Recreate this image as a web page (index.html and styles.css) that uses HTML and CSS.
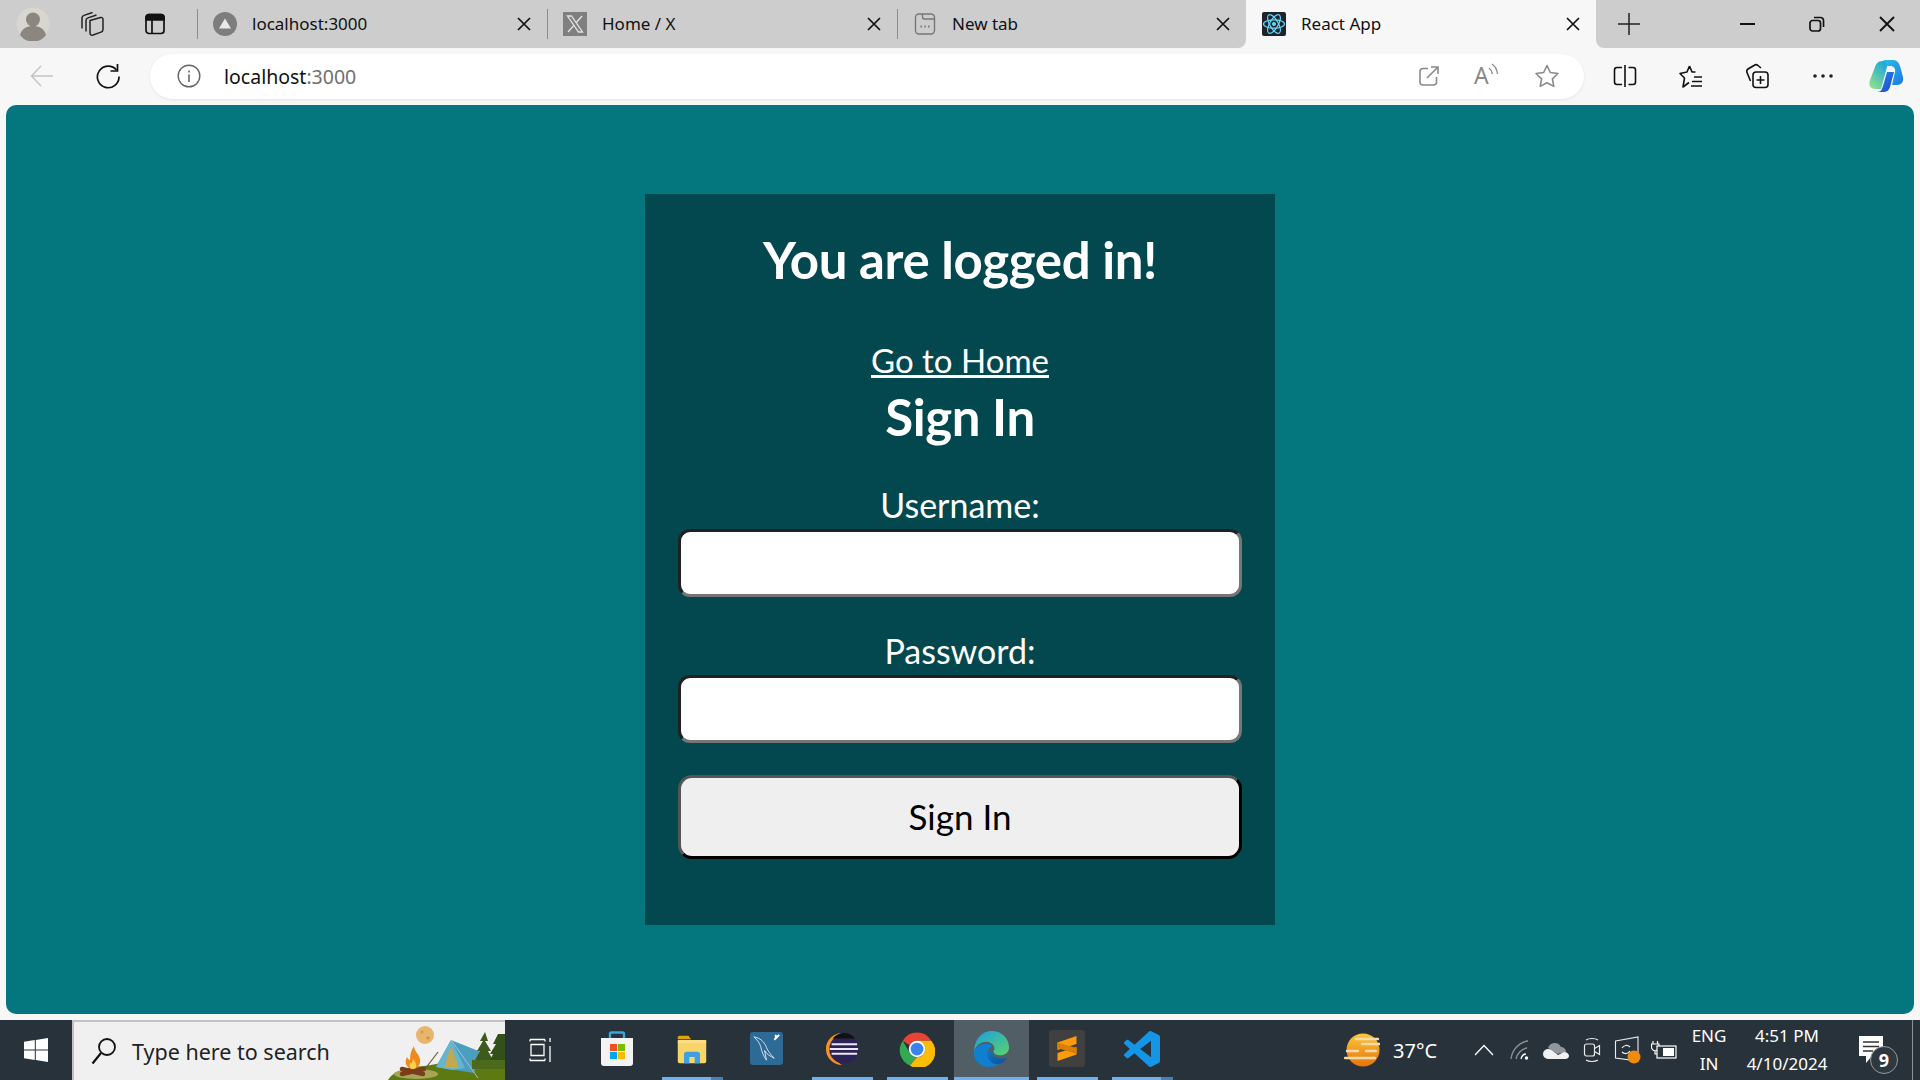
FILE: index.html
```html
<!DOCTYPE html>
<html lang="en">
<head>
  <meta charset="UTF-8" />
  <title>React App</title>
  <link rel="stylesheet" href="styles.css">
</head>
<body>

  <!-- browser tabs -->
  <div class="tabstrip">
    <div class="strip-grey strip-left">
      <div class="strip-tool strip-avatar">
        <svg width="34" height="34" viewBox="0 0 34 34"><circle cx="17" cy="17" r="16.500" fill="#d8d7cf"/><circle cx="17" cy="12.500" r="7" fill="#8b8780"/><path d="M4 28c2-7 7-9 13-9s11 2 13 9a16 16 0 0 1-26 0z" fill="#8b8780"/></svg>
      </div>
      <div class="strip-tool strip-workspaces">
        <svg width="26" height="26" viewBox="0 0 26 26" fill="none" stroke="#222" stroke-width="1.500"><path d="M11 9.500 21.500 6.500c1.500-.4 2.500.5 2.500 2v10c0 1.300-.7 2.200-2 2.600L14 24c-1.700.5-3-.4-3-2z"/><path d="M7 20.500V9.500c0-1.300.7-2.200 2-2.600L17.500 4"/><path d="M3 17.500V7c0-1.300.7-2.200 2-2.600L13.500 1.500"/></svg>
      </div>
      <div class="strip-tool strip-vertical">
        <svg width="24" height="24" viewBox="0 0 24 24" fill="none" stroke="#111" stroke-width="1.700"><rect x="3" y="2.500" width="18" height="19" rx="3"/><path d="M3 5.500a3 3 0 0 1 3-3h12a3 3 0 0 1 3 3V8H3z" fill="#111"/><path d="M9 8v13"/></svg>
      </div>

      <span class="tab-sep"></span>
      <div class="tab">
        <svg class="tab-icon" width="24" height="24" viewBox="0 0 24 24"><circle cx="12" cy="12" r="12" fill="#7d7d7d"/><path d="M12 6.500 18 16.500H6z" fill="#e9e9e9"/></svg>
        <span class="tab-title">localhost:3000</span>
        <svg class="tab-close" width="16" height="16" viewBox="0 0 16 16" stroke="#111" stroke-width="1.700"><path d="M2 2l12 12M14 2 2 14"/></svg>
      </div>

      <span class="tab-sep"></span>
      <div class="tab">
        <svg class="tab-icon" width="24" height="24" viewBox="0 0 24 24"><rect width="24" height="24" fill="#7f7f7f"/><path d="M4.500 4h4l11 16h-4z" fill="none" stroke="#e4e4e4" stroke-width="1.300"/><path d="M19 4 13.200 10.800M10.600 13.600 5 20" stroke="#e4e4e4" stroke-width="1.400"/></svg>
        <span class="tab-title">Home / X</span>
        <svg class="tab-close" width="16" height="16" viewBox="0 0 16 16" stroke="#111" stroke-width="1.700"><path d="M2 2l12 12M14 2 2 14"/></svg>
      </div>

      <span class="tab-sep"></span>
      <div class="tab tab-last">
        <svg class="tab-icon" width="24" height="24" viewBox="0 0 24 24" fill="none" stroke="#777" stroke-width="1.400"><rect x="2.500" y="2" width="19" height="20" rx="3.500"/><path d="M9.500 2v3a2 2 0 0 0 2 2h10"/><path d="M7.500 14.500h1.500M11.300 14.500h1.500M15 14.500h1.500" stroke-width="1.800"/></svg>
        <span class="tab-title">New tab</span>
        <svg class="tab-close" width="16" height="16" viewBox="0 0 16 16" stroke="#111" stroke-width="1.700"><path d="M2 2l12 12M14 2 2 14"/></svg>
      </div>
    </div>

    <div class="tab tab-active">
      <svg class="tab-icon" width="24" height="24" viewBox="0 0 24 24"><rect width="24" height="24" rx="2" fill="#20232a"/><g fill="none" stroke="#61dafb" stroke-width="1.200"><ellipse cx="12" cy="12" rx="10.500" ry="4.200"/><ellipse cx="12" cy="12" rx="10.500" ry="4.200" transform="rotate(60 12 12)"/><ellipse cx="12" cy="12" rx="10.500" ry="4.200" transform="rotate(120 12 12)"/></g><circle cx="12" cy="12" r="2" fill="#61dafb"/></svg>
      <span class="tab-title">React App</span>
      <svg class="tab-close" width="16" height="16" viewBox="0 0 16 16" stroke="#111" stroke-width="1.700"><path d="M2 2l12 12M14 2 2 14"/></svg>
    </div>

    <div class="strip-grey strip-right">
      <svg class="new-tab" width="24" height="24" viewBox="0 0 24 24" stroke="#222" stroke-width="1.500"><path d="M12 1v22M1 12h22"/></svg>
      <div class="win-controls">
        <svg width="18" height="18" viewBox="0 0 18 18" stroke="#111" stroke-width="2"><path d="M2 9h15"/></svg>
        <svg width="18" height="18" viewBox="0 0 18 18" fill="none" stroke="#111" stroke-width="1.700"><rect x="2" y="5.500" width="10.500" height="10.500" rx="2.500"/><path d="M6 2.500h6.500a3 3 0 0 1 3 3V12"/></svg>
        <svg width="18" height="18" viewBox="0 0 18 18" stroke="#111" stroke-width="1.900"><path d="M2 2l14 14M16 2 2 16"/></svg>
      </div>
    </div>
  </div>

  <!-- address bar -->
  <div class="toolbar">
    <div class="nav-btns">
      <svg width="24" height="24" viewBox="0 0 24 24" fill="none" stroke="#c4c4c4" stroke-width="1.500"><path d="M23 12H1.500M11 2 1.500 12 11 22"/></svg>
      <svg width="26" height="26" viewBox="0 0 26 26" fill="none" stroke="#111" stroke-width="1.700"><path d="M21.500 7A10.800 10.800 0 1 0 24 13.500"/><path d="M22.500 1v7h-7"/></svg>
    </div>
    <div class="address">
      <svg width="24" height="24" viewBox="0 0 24 24" fill="none" stroke="#666" stroke-width="1.400"><circle cx="12" cy="12" r="10.800"/><path d="M12 10.500V18M12 6.500v2" stroke-width="1.600"/></svg>
      <span class="url">localhost<span class="url-port">:3000</span></span>
      <div class="address-tools">
        <svg width="22" height="22" viewBox="0 0 22 22" fill="none" stroke="#8a8a8a" stroke-width="1.600"><path d="M10 3.500H5a3 3 0 0 0-3 3v10.500a3 3 0 0 0 3 3h10.500a3 3 0 0 0 3-3V12"/><path d="M9 13 20 2M13 2h7v7"/></svg>
        <svg class="read-icon" width="28" height="34" viewBox="0 0 28 34" fill="none" stroke="#8a8a8a" stroke-width="1.300"><text class="read-a" x="1" y="25">A</text><path d="M16 9c2 1.500 3 3.500 3.500 6M19 5c3 2 5 5 5.500 10"/></svg>
        <svg width="26" height="26" viewBox="0 0 26 26" fill="none" stroke="#8a8a8a" stroke-width="1.600"><path d="M13 2.500l3.300 7 7.700 1-5.600 5.300 1.400 7.600-6.800-3.700-6.800 3.700 1.400-7.600L2 10.500l7.700-1z" stroke-linejoin="round"/></svg>
      </div>
    </div>
    <div class="toolbar-actions">
      <svg class="tool-btn" width="24" height="24" viewBox="0 0 24 24" fill="none" stroke="#111" stroke-width="1.600"><path d="M9 3.500H4a2.500 2.500 0 0 0-2.500 2.500v12A2.500 2.500 0 0 0 4 20.500h5M15.500 3.500H20A2.500 2.500 0 0 1 22.500 6v12a2.500 2.500 0 0 1-2.500 2.500h-4.500M12 1v22"/></svg>
      <svg class="tool-btn" width="24" height="24" viewBox="0 0 24 24" fill="none" stroke="#111" stroke-width="1.600"><path d="M10.500 2 13 8h3.500M10.500 2 8 8 1 9.500l4.500 4.500L4 23l6-4.500M15 13h8M13 17.500h10M12 22h11" stroke-linejoin="round"/></svg>
      <svg class="tool-btn" width="24" height="26" viewBox="0 0 24 26" fill="none" stroke="#111" stroke-width="1.600"><rect x="8" y="9" width="15" height="15.500" rx="3"/><path d="M15.500 13v8M11.500 17h8"/><path d="M16 5 13 2.500a3 3 0 0 0-4 0L3 6a3 3 0 0 0-1 3.500L5.500 18"/></svg>
      <svg class="tool-btn" width="24" height="24" viewBox="0 0 24 24" fill="#222"><circle cx="4" cy="12" r="1.800"/><circle cx="12" cy="12" r="1.800"/><circle cx="20" cy="12" r="1.800"/></svg>
      <svg class="copilot" width="36" height="32" viewBox="0 0 36 32">
        <defs>
          <linearGradient id="copA" x1="0" y1="0" x2="1" y2="1"><stop offset="0" stop-color="#2cc0ea"/><stop offset="1" stop-color="#1c78e4"/></linearGradient>
          <linearGradient id="copB" x1="0.200" y1="1" x2="0.800" y2="0"><stop offset="0" stop-color="#8fe08a"/><stop offset="1" stop-color="#17a6dc"/></linearGradient>
          <linearGradient id="copC" x1="0" y1="0" x2="1" y2="1"><stop offset="0" stop-color="#2a8cee"/><stop offset="1" stop-color="#1a48c8"/></linearGradient>
        </defs>
        <path d="M15 1C10 1 8 4 7 7L2 20c-2 6 1 9 6 9h5l6-22c1-4-1-6-4-6z" fill="url(#copB)"/>
        <path d="M15 0h10c4 0 6 3 7 6l3 11c1 5-2 8-6 8h-5l3-13c1-4-2-6-5-6h-4c0-3-1-5-3-6z" fill="url(#copA)"/>
        <path d="M19 12h7l-4 15c-1 3-3 5-7 5H9c4 0 5-3 6-6z" fill="url(#copC)"/>
      </svg>
    </div>
  </div>

  <!-- the actual page -->
  <main class="page">
    <section class="auth-card">
      <h1 class="auth-title">You are logged in!</h1>
      <a class="home-link" href="#">Go to Home</a>
      <h2 class="auth-title form-title">Sign In</h2>
      <form class="auth-form">
        <label class="field-label" for="username">Username:</label>
        <input class="field-input" id="username" type="text">
        <label class="field-label field-label-next" for="password">Password:</label>
        <input class="field-input" id="password" type="password">
        <button class="submit-btn" type="button">Sign In</button>
      </form>
    </section>
  </main>

  <!-- windows taskbar -->
  <footer class="taskbar">
    <div class="start-btn">
      <svg width="24" height="24" viewBox="0 0 24 24" fill="#fff"><path d="M0 3.700 10.800 2.100V11.400H0zM11.800 2 24 0V11.400H11.800zM0 12.500H10.800V21.900L0 20.300zM11.800 12.500H24V24L11.800 22z"/></svg>
    </div>
    <div class="searchbox">
      <svg class="search-icon" width="26" height="28" viewBox="0 0 26 28" fill="none" stroke="#111" stroke-width="1.800"><circle cx="16" cy="10" r="8"/><path d="M10 16 1.500 26.500" stroke-width="2.200"/></svg>
      <span class="search-text">Type here to search</span>
      <svg class="search-art" width="117" height="58" viewBox="0 0 117 58">
        <path d="M0 58c6-10 20-13 36-14 14-1 30-8 48-8 14 0 26 4 33 6v16z" fill="#5d7a12"/>
        <ellipse cx="28" cy="52" rx="22" ry="5" fill="#a5a655"/>
        <circle cx="37" cy="13" r="9" fill="#e8b56c"/>
        <circle cx="34" cy="10" r="1.500" fill="#cf9650"/><circle cx="40" cy="16" r="1.800" fill="#cf9650"/>
        <path d="M25 48c-7-2-9-8-6-13 1 2 2 3 3 3 0-5 1-10 4-14 0 5 5 8 6 13 1 5-2 9-7 11z" fill="#f08a1d"/>
        <path d="M25 48c-3-1-4-4-3-7 2 1 2 0 3-4 2 3 4 5 3 8 0 1-1 2-3 3z" fill="#f9d24a"/>
        <path d="M14 47l21 5M14 52l22-5" stroke="#7a3d1c" stroke-width="4.500" stroke-linecap="round"/>
        <path d="M37 47 50 30" stroke="#6b5a3a" stroke-width="1.200"/>
        <path d="M48 45 63 18l30 12-7 21z" fill="#4a9fc0"/>
        <path d="M63 18 48 45l16 3 13-2z" fill="#64b4d2"/>
        <path d="M63 24 56 46h15z" fill="#c2a94a"/>
        <path d="M63 18 90 56" stroke="#a9c0c8" stroke-width="1"/>
        <path d="M97 10l-5 9h3l-6 10h3l-6 11h20l-6-11h3l-6-10h3z" fill="#3e5a1c"/>
        <path d="M110 12l-5 10h3l-6 10h3l-5 10h20V12z" fill="#33501a"/>
        <path d="M84 38h33v9H84z" fill="#4c6a1c"/>
      </svg>
    </div>

    <div class="task-view">
      <svg width="24" height="26" viewBox="0 0 24 26" fill="none" stroke="#fff" stroke-width="1.300"><path d="M1 2.500h15M1 23.500h15M2 7.500h13v11H2zM1 23.500v-2M16 23.500v-2M1 2.500v2M16 2.500v2M21 1v4M21 9v16"/></svg>
    </div>

    <div class="task-apps">
      <div class="task-app">
        <svg width="34" height="36" viewBox="0 0 34 36"><path d="M10 7V3a1.500 1.500 0 0 1 1.500-1.500h11A1.500 1.500 0 0 1 24 3v4" fill="none" stroke="#35a8e0" stroke-width="2.400"/><path d="M1 7h32v25a3 3 0 0 1-3 3H4a3 3 0 0 1-3-3z" fill="#f3f3f3"/><rect x="10" y="13" width="7" height="7" fill="#f25022"/><rect x="18" y="13" width="7" height="7" fill="#7fba00"/><rect x="10" y="21" width="7" height="7" fill="#00a4ef"/><rect x="18" y="21" width="7" height="7" fill="#ffb900"/></svg>
      </div>
      <div class="task-app task-running task-stacked">
        <svg width="32" height="32" viewBox="0 0 36 36"><rect x="2" y="8" width="32" height="26" rx="2" fill="#f8d568"/><path d="M2 5a2 2 0 0 1 2-2h10l3 4H2z" fill="#dfa510"/><path d="M2 8h32v3H2z" fill="#fbe08a"/><path d="M9 34V24a3 3 0 0 1 3-3h12a3 3 0 0 1 3 3v10h-6v-7h-6v7z" fill="#3f9fe0"/></svg>
      </div>
      <div class="task-app">
        <svg width="35" height="35" viewBox="0 0 36 36"><rect x="1" y="1" width="34" height="34" rx="3" fill="#2d6a96"/><path d="M5 6c6 1 11 5 13 11 1 3 4 7 8 11-4-2-8-4-10-8l2 10c-3-4-5-9-6-14-1-4-4-7-7-10z" fill="none" stroke="#e8eef2" stroke-width=".9"/><path d="M26 9l5-5M27 4c1 1 1 3 0 4" stroke="#fff" stroke-width="2" fill="none"/></svg>
      </div>
      <div class="task-app task-running">
        <svg width="36" height="34" viewBox="0 0 36 36"><path d="M18 1A17 17 0 0 0 18 35 20 20 0 0 1 18 1z" fill="#f7941e"/><circle cx="20" cy="18" r="15.500" fill="#2c2255"/><path d="M8 7h24a15 15 0 0 0-24 0z" fill="#111"/><path d="M7 13h27M5 18h30M7 23h27" stroke="#ece8f6" stroke-width="2.200"/></svg>
      </div>
      <div class="task-app task-running">
        <svg width="36" height="36" viewBox="0 0 48 48"><path d="M24 2a22 22 0 0 1 19 11H24a11 11 0 0 0-10 6L5 13A22 22 0 0 1 24 2z" fill="#ea4335"/><path d="M5 13l9.500 16.500A11 11 0 0 0 24 35l-9.500 11A22 22 0 0 1 5 13z" fill="#34a853"/><path d="M43 13a22 22 0 0 1-28.500 33L24 35a11 11 0 0 0 9.500-16.500L24 13z" fill="#fbbc04"/><circle cx="24" cy="24" r="11" fill="#fff"/><circle cx="24" cy="24" r="8.500" fill="#3b82ee"/></svg>
      </div>
      <div class="task-app task-active">
        <svg width="37" height="37" viewBox="0 0 38 38">
          <defs>
            <linearGradient id="edgeTop" x1="0" y1="0" x2="1" y2="1"><stop offset="0" stop-color="#1b9de2"/><stop offset="1" stop-color="#5ad46a"/></linearGradient>
            <linearGradient id="edgeLow" x1="0" y1="0" x2="1" y2="1"><stop offset="0" stop-color="#0c78c8"/><stop offset="1" stop-color="#0e4f9e"/></linearGradient>
          </defs>
          <path d="M19 1C30 1 37 9 37 18c0 5-4 8-9 8-4 0-7-2-7-4 0-1 1-1 1-3 0-4-4-7-8-7-7 0-13 5-13 12C1 10 9 1 19 1z" fill="url(#edgeTop)"/>
          <path d="M1 24c0 8 7 14 15 14 4 0 8-1 11-3-6 1-12-3-12-10 0-4 2-7 5-9-1-1-3-2-6-2C7 14 1 18 1 24z" fill="#0f7fd0"/>
          <path d="M15 25c0 7 6 11 12 10 4-1 7-4 8-7-2 1-5 2-8 1-4 0-7-2-7-5 0-1 0-1 1-2-3-2-5 0-6 3z" fill="url(#edgeLow)"/>
        </svg>
      </div>
      <div class="task-app task-running">
        <svg width="36" height="37" viewBox="0 0 36 37"><rect width="36" height="37" rx="3" fill="#404040"/><path d="M27.500 6v8L8.500 20v-7.500z" fill="#ff9a0d"/><path d="M8.500 31v-8l19-6v7.500z" fill="#ff9a0d"/><path d="M8.500 18 27.500 24v-6L8.500 12.500z" fill="#d97f06"/></svg>
      </div>
      <div class="task-app task-running task-stacked">
        <svg width="36" height="36" viewBox="0 0 24 24"><path fill="#1495e6" d="M23.150 2.587L18.210.21a1.494 1.494 0 0 0-1.705.29l-9.460 8.630-4.120-3.128a.999.999 0 0 0-1.276.057L.327 7.261A1 1 0 0 0 .326 8.740L3.899 12 .326 15.260a1 1 0 0 0 .001 1.479L1.650 17.940a.999.999 0 0 0 1.276.057l4.120-3.128 9.460 8.630a1.492 1.492 0 0 0 1.704.29l4.942-2.377A1.500 1.500 0 0 0 24 20.060V3.939a1.500 1.500 0 0 0-.850-1.352zm-5.146 14.861L10.826 12l7.178-5.448v10.896z"/></svg>
      </div>
    </div>

    <div class="tray">
      <div class="weather">
        <svg width="36" height="34" viewBox="0 0 36 34">
          <defs><linearGradient id="sunFill" x1="0" y1="0" x2="0" y2="1"><stop offset="0" stop-color="#fbc93a"/><stop offset="1" stop-color="#e8720c"/></linearGradient></defs>
          <circle cx="19" cy="17" r="16.500" fill="url(#sunFill)"/>
          <path d="M12 6h22M18 11h18M3 18h11M22 18h10M1 25h30" stroke="#f2dcae" stroke-width="2.400" stroke-linecap="round"/>
        </svg>
      </div>
      <span class="temp">37°C</span>
      <div class="tray-icon tray-first">
        <svg width="20" height="12" viewBox="0 0 20 12" fill="none" stroke="#fff" stroke-width="1.300"><path d="M1 11 10 1.500 19 11"/></svg>
      </div>
      <div class="tray-icon">
        <svg width="20" height="20" viewBox="0 0 20 20" fill="none" stroke="#8d9499" stroke-width="1.300"><path d="M1 19C2 10 9 2 18 1M6 19c1-5 5-10 11-11"/><path d="M11 19c.5-2 2-5 5-5" stroke="#fff"/><circle cx="16.500" cy="18" r="1.700" fill="#fff" stroke="none"/></svg>
      </div>
      <div class="tray-icon">
        <svg width="26" height="18" viewBox="0 0 26 18"><path d="M5 7a7 7 0 0 1 13-1 5 5 0 0 1 5 5l-9 2z" fill="#8f979c"/><path d="M5 18a5 5 0 0 1 0-10c2 0 4 1 6 3l4 3 6-3c3 0 5 2 5 4s-2 3-4 3z" fill="#f1f1f1"/></svg>
      </div>
      <div class="tray-icon">
        <svg width="18" height="26" viewBox="0 0 18 26" fill="none" stroke="#ececec" stroke-width="1.200"><rect x="1.500" y="7" width="10" height="12" rx="2"/><path d="M11.500 11.500 16.500 8.500v9l-5-3M3 3c3-2 9-2 12 0M3 23c3 2 9 2 12 0"/></svg>
      </div>
      <div class="tray-icon">
        <svg width="28" height="28" viewBox="0 0 28 28"><path d="M1.500 5 24 1v24L1.500 22z" fill="none" stroke="#ececec" stroke-width="1.100"/><path d="M8 12a5 5 0 0 1 8-1M16 15a5 5 0 0 1-8 1" fill="none" stroke="#ececec" stroke-width="1.200"/><circle cx="20" cy="21" r="6.500" fill="#f38a0a"/></svg>
      </div>
      <div class="tray-icon">
        <svg width="26" height="20" viewBox="0 0 26 20" fill="none" stroke="#fff" stroke-width="1.200"><path d="M2 1v3M6.500 1v3M.5 4h7.500v3a3.500 3.500 0 0 1-7.500 0zM4 10.500V14h2"/><rect x="6" y="6" width="19" height="12" fill="#2a333a"/><rect x="12" y="8" width="11" height="8" fill="#fff" stroke="none"/></svg>
      </div>
      <div class="tray-lang"><span>ENG</span><span>IN</span></div>
      <div class="tray-clock"><span>4:51 PM</span><span>4/10/2024</span></div>
      <div class="notify">
        <svg width="26" height="30" viewBox="0 0 26 30"><path d="M1 1h24v20H14l-6 7v-7H1z" fill="#fff"/><path d="M5 7h16M5 11.500h16M5 16h10" stroke="#333" stroke-width="1.300"/></svg>
        <span class="notify-badge">9</span>
      </div>
      <span class="tray-edge"></span>
    </div>
  </footer>

</body>
</html>
```

FILE: styles.css
```css
* {
  box-sizing: border-box;
}

html, body {
  height: 100%;
}

body {
  margin: 0;
  height: 1080px;
  display: flex;
  flex-direction: column;
  background-color: #f7f7f7;
  overflow: hidden;
  font-family: "Noto Sans", "Open Sans", sans-serif;
}

svg {
  display: block;
  flex-shrink: 0;
}

/* tabs */
.tabstrip {
  display: flex;
  height: 48px;
  background-color: #f7f7f7;
  color: #111;
}

.strip-grey {
  display: flex;
  align-items: center;
  background-color: #cdcdcd;
}

.strip-left {
  width: 1246px;
  border-bottom-right-radius: 8px;
}

.strip-right {
  flex: 1;
  border-bottom-left-radius: 8px;
}

.strip-tool {
  display: flex;
  align-items: center;
  justify-content: center;
  height: 100%;
}

.strip-avatar { width: 66px; }
.strip-workspaces { width: 52px; }
.strip-vertical { width: 74px; margin-right: 5px; }

.tab-sep {
  width: 1px;
  height: 30px;
  background-color: #8c8c8c;
}

.tab {
  display: flex;
  align-items: center;
  width: 349px;
  height: 100%;
  padding: 0 15px;
  font-size: 17px;
}

.tab-title {
  flex: 1;
  margin-left: 15px;
  padding-bottom: 2px;
  white-space: nowrap;
}

.tab-last {
  width: 348px;
}

.tab-active {
  width: 350px;
  background-color: #f7f7f7;
  border-radius: 10px 10px 0 0;
  padding-left: 16px;
}

.new-tab {
  margin-left: 21px;
}

.win-controls {
  display: flex;
  align-items: center;
  gap: 52px;
  margin-left: 97px;
}

/* toolbar */
.toolbar {
  display: flex;
  align-items: center;
  height: 57px;
  padding-bottom: 1px;
}

.nav-btns {
  display: flex;
  align-items: center;
  gap: 41px;
  width: 150px;
  padding-left: 30px;
}

.address {
  display: flex;
  align-items: center;
  width: 1434px;
  height: 45px;
  padding: 0 24px 0 27px;
  background-color: #fff;
  border-radius: 23px;
  box-shadow: 0 1px 3px rgba(0, 0, 0, 0.08);
}

.url {
  margin-left: 23px;
  font-size: 19.5px;
  color: #111;
}

.url-port {
  color: #6f6f6f;
}

.address-tools {
  display: flex;
  align-items: center;
  gap: 33px;
  margin-left: auto;
}

.read-a {
  font-family: "Noto Sans", sans-serif;
  font-size: 23px;
  fill: #8a8a8a;
  stroke: none;
}

.toolbar-actions {
  display: flex;
  align-items: center;
  padding-left: 29px;
}

.tool-btn + .tool-btn {
  margin-left: 42px;
}

.copilot {
  margin-left: 33px;
}

/* page */
.page {
  flex: 1;
  display: flex;
  align-items: center;
  justify-content: center;
  margin: 0 6px 6px;
  background-color: #04767e;
  border-radius: 10px;
}

.auth-card {
  display: flex;
  flex-direction: column;
  align-items: center;
  width: 630px;
  height: 731px;
  padding: 36px 33px 0;
  background-color: #03484f;
  color: #fff;
  font-family: "Lato", "Open Sans", sans-serif;
}

.auth-title {
  margin: 0;
  font-size: 51px;
  line-height: 60px;
  font-weight: 700;
  letter-spacing: -0.4px;
}

.home-link {
  margin-top: 48px;
  font-size: 33px;
  line-height: 44px;
  color: #fff;
}

.form-title {
  margin-top: 5px;
}

.auth-form {
  display: flex;
  flex-direction: column;
  align-items: center;
  width: 100%;
  margin-top: 36px;
}

.field-label {
  font-size: 34px;
  line-height: 44px;
}

.field-label-next {
  margin-top: 32px;
}

.field-input {
  display: block;
  width: 100%;
  height: 68px;
  margin-top: 2px;
  background-color: #fff;
  border: 3px solid #767676;
  border-color: #202020 #767676 #767676 #202020;
  border-radius: 12px;
}

.submit-btn {
  width: 100%;
  height: 84px;
  margin-top: 32px;
  padding-bottom: 4px;
  background-color: #efefef;
  border: 3px solid #000;
  border-color: #555 #000 #000 #555;
  border-radius: 14px;
  color: #000;
  font-family: inherit;
  font-size: 35px;
}

/* taskbar */
.taskbar {
  display: flex;
  align-items: stretch;
  height: 60px;
  background-color: #28323a;
  color: #fff;
}

.start-btn {
  display: flex;
  align-items: center;
  justify-content: center;
  width: 72px;
}

.searchbox {
  display: flex;
  align-items: center;
  width: 433px;
  padding-left: 17px;
  background-color: #f0f0f0;
  border: 2px solid #c2c2c2;
  border-bottom: 0;
  border-right: 0;
}

.search-text {
  margin-left: 15px;
  font-size: 21.500px;
  color: #222;
  white-space: nowrap;
}

.search-art {
  align-self: flex-end;
  margin-left: auto;
}

.task-view {
  display: flex;
  align-items: center;
  justify-content: center;
  width: 74px;
  padding-right: 2px;
}

.task-apps {
  display: flex;
}

.task-app {
  position: relative;
  display: flex;
  align-items: center;
  justify-content: center;
  width: 75px;
  padding-bottom: 3px;
}

.task-running::after,
.task-active::after {
  content: "";
  position: absolute;
  left: 8px;
  right: 6px;
  bottom: 0;
  height: 3px;
  background-color: #6fb1ea;
}

.task-stacked::before {
  content: "";
  position: absolute;
  right: 6px;
  bottom: 0;
  width: 12px;
  height: 3px;
  background-color: #4a7fb5;
  z-index: 1;
}

.task-active {
  background-color: #525e65;
}

.task-active::after {
  left: 0;
  right: 0;
}

.tray {
  display: flex;
  align-items: center;
  margin-left: auto;
  padding-right: 7px;
}

.weather {
  display: flex;
  justify-content: center;
  width: 44px;
}

.temp {
  width: 48px;
  margin-left: 9px;
  font-size: 20px;
  white-space: nowrap;
}

.tray-icon {
  display: flex;
  align-items: center;
  justify-content: center;
  width: 36px;
}

.tray-first {
  margin-left: 25px;
}

.tray-lang,
.tray-clock {
  display: flex;
  flex-direction: column;
  align-items: center;
  gap: 6px;
  font-size: 17px;
  line-height: 22px;
  white-space: nowrap;
}

.tray-lang {
  width: 44px;
  margin-left: 5px;
}

.tray-clock {
  width: 100px;
  margin-left: 6px;
}

.notify {
  position: relative;
  width: 40px;
  margin-left: 13px;
  padding-left: 8px;
}

.notify-badge {
  position: absolute;
  left: 20px;
  top: 11px;
  width: 28px;
  height: 28px;
  background-color: #2f383f;
  border: 1px solid #999;
  border-radius: 50%;
  font-size: 18px;
  font-weight: 700;
  line-height: 26px;
  text-align: center;
}

.tray-edge {
  align-self: stretch;
  width: 1px;
  margin-left: 22px;
  background-color: #8c9296;
}
```
